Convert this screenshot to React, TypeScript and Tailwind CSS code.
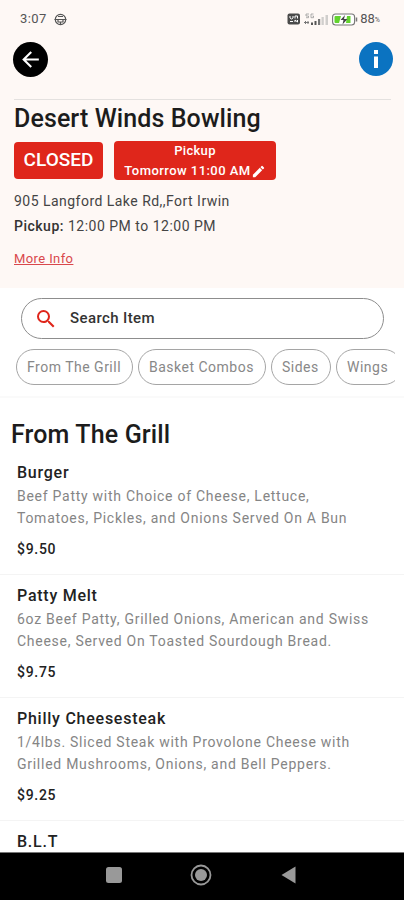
import { MdArrowBack, MdEdit, MdSearch } from "react-icons/md";

interface MenuItem {
  name: string;
  description: string[];
  price: string;
}

const categories = [
  { label: "From The Grill", width: "w-[117px]" },
  { label: "Basket Combos", width: "w-[128px]" },
  { label: "Sides", width: "w-[60px]" },
  { label: "Wings", width: "w-[66px]" },
];

const items: MenuItem[] = [
  {
    name: "Burger",
    description: ["Beef Patty with Choice of Cheese, Lettuce,", "Tomatoes, Pickles, and Onions Served On A Bun"],
    price: "$9.50",
  },
  {
    name: "Patty Melt",
    description: ["6oz Beef Patty, Grilled Onions, American and Swiss", "Cheese, Served On Toasted Sourdough Bread."],
    price: "$9.75",
  },
  {
    name: "Philly Cheesesteak",
    description: ["1/4lbs. Sliced Steak with Provolone Cheese with", "Grilled Mushrooms, Onions, and Bell Peppers."],
    price: "$9.25",
  },
  { name: "B.L.T", description: [], price: "" },
];

function StatusBar() {
  return (
    <div className="flex h-[38px] items-center pl-5 pr-[24px] text-[#555]">
      <span className="text-[13px] tracking-[0.4px]">3:07</span>
      <svg className="ml-[7px]" width="13" height="13" viewBox="0 0 13 13" fill="none" stroke="#555" strokeWidth="1.2">
        <circle cx="6.5" cy="6.5" r="5.2" />
        <path d="M0.500 6.500h12M4 7v2h5V7M6.500 9v2.500M4 3.500h5" />
      </svg>
      <div className="ml-auto flex items-center">
        <svg width="14" height="12" viewBox="0 0 14 12" fill="none">
          <rect x="0.5" y="0.5" width="12.5" height="11" rx="2" fill="#4a4a4a" />
          <path d="M3 3v2l1.500 1L6 5V3M8 5.500V3h2.500v2.500M3 8.500h3M8 9V7l2.500 2V7" stroke="#fff" strokeWidth="1" />
        </svg>
        <svg className="ml-[3px]" width="25" height="13" viewBox="0 0 25 13">
          <path d="M2 1h3M2 1v2h2.500v1.700H2M9.500 1H7v3.700h2.500V3H8.500" fill="none" stroke="#999" strokeWidth="0.8" />
          <path d="M0 9.500h5M1.500 8v3M4 8v3" fill="none" stroke="#777" strokeWidth="1" />
          <path d="M7 9.500h2V12H7zM10.500 8h2v4h-2z" fill="#555" />
          <path d="M14 6h2.200v6H14z" fill="#777" />
          <path d="M17.500 4h2.300v8h-2.300zM21.500 2h2.500v10h-2.500z" fill="#d0cecc" />
        </svg>
        <svg className="ml-[3px]" width="26" height="13" viewBox="0 0 26 13">
          <rect x="0.6" y="1" width="22" height="11" rx="3" fill="#fff" stroke="#777" strokeWidth="1.100" />
          <path d="M24.500 4.500v4" stroke="#777" strokeWidth="1.500" />
          <path d="M3.500 3H9L7 10H3.500A1 1 0 0 1 2.500 9V4A1 1 0 0 1 3.500 3zM15 3h3.500v7H14z" fill="#63d32e" />
          <path d="M13 2 8.500 7h3L10.500 11.500l5-5.500H12z" fill="#444" />
        </svg>
        <span className="ml-[2px] text-[13px]">88</span>
        <span className="mt-[3px] text-[7px]">%</span>
      </div>
    </div>
  );
}

function StoreHeader() {
  return (
    <header className="h-[288px] bg-[#fef8f5]">
      <StatusBar />
      <div className="flex items-start justify-between pl-[13px] pr-[11px] pt-1">
        <button className="flex size-[35px] items-center justify-center rounded-full bg-black">
          <MdArrowBack className="size-[25px] text-white" />
        </button>
        <button className="flex size-[34px] items-center justify-center rounded-full bg-[#0b73c1]">
          <svg width="6" height="18" viewBox="0 0 6 18" fill="#fff">
            <path d="M1 0h4v4H1zM1 6.500h4V18H1z" />
          </svg>
        </button>
      </div>
      <div className="ml-[14px] mr-[13px] mt-[22px] border-t border-[#e4e1df]" />
      <div className="pl-[14px]">
        <h1 className="mt-[3px] whitespace-nowrap text-[25px] font-medium leading-[32px] tracking-[0.1px] text-[#1c1c1c]">
          Desert Winds Bowling
        </h1>
        <div className="mt-[6px] flex items-center">
          <div className="flex h-[37px] w-[89px] items-center justify-center rounded-[4px] bg-[#df261b] text-[19px] font-medium text-white">
            CLOSED
          </div>
          <div className="ml-[11px] flex h-[39px] w-[162px] flex-col items-center rounded-[4px] bg-[#df261b] text-[13px] font-medium leading-[20px] text-white">
            <span className="tracking-[0.3px]">Pickup</span>
            <span className="flex items-center whitespace-nowrap tracking-[0.45px]">
              Tomorrow 11:00 AM
              <MdEdit className="size-[15px]" />
            </span>
          </div>
        </div>
        <p className="mt-[11px] text-[14px] leading-[20px] tracking-[0.47px] text-[#444]">905 Langford Lake Rd,,Fort Irwin</p>
        <p className="mt-[5px] text-[14px] leading-[20px] tracking-[0.5px] text-[#444]">
          <span className="font-medium text-[#333]">Pickup:</span> 12:00 PM to 12:00 PM
        </p>
        <a className="mt-[14px] block text-[13px] leading-[18px] tracking-[0.4px] text-[#d9484c] underline">More Info</a>
      </div>
    </header>
  );
}

function SearchAndCategories() {
  return (
    <section className="h-[110px] border-b-2 border-[#fafafa] pt-[10px]">
      <div className="ml-[21px] flex h-[41px] w-[363px] items-center rounded-full border border-[#8d8d8d] pl-3">
        <MdSearch className="size-[24px] text-[#df261b]" />
        <span className="ml-[12px] text-[15px] font-medium tracking-[0.4px] text-[#333]">Search Item</span>
      </div>
      <div className="ml-4 mr-[9px] mt-[10px] flex gap-[5px] overflow-hidden">
        {categories.map((c) => (
          <div
            key={c.label}
            className={`flex h-[36px] shrink-0 items-center whitespace-nowrap rounded-full border border-[#a5a5a5] pl-[10px] text-[14px] tracking-[0.5px] text-[#888] ${c.width}`}
          >
            {c.label}
          </div>
        ))}
      </div>
    </section>
  );
}

function MenuRow({ item }: { item: MenuItem }) {
  return (
    <li className="h-[123px] border-b border-[#f4f4f4] pl-[17px] pt-[10px]">
      <h3 className="text-[16px] font-medium leading-[22px] tracking-[0.75px] text-[#222]">{item.name}</h3>
      <p className="mt-px text-[14px] leading-[22px] tracking-[0.73px] text-[#858585]">
        {item.description.map((line) => (
          <span key={line} className="block whitespace-nowrap">{line}</span>
        ))}
      </p>
      <p className="mt-[9px] text-[14px] font-medium leading-[22px] tracking-[0.7px] text-[#222]">{item.price}</p>
    </li>
  );
}

function NavigationBar() {
  return (
    <nav className="flex h-[48px] shrink-0 items-start border-t border-[#777] bg-black">
      <svg width="404" height="46" viewBox="0 0 404 46" fill="#999">
        <rect x="106" y="14" width="16" height="16" rx="2.500" />
        <circle cx="201" cy="22" r="9.500" fill="none" stroke="#999" strokeWidth="1.800" />
        <circle cx="201" cy="22" r="6" />
        <path d="M281.500 22 295.500 13.500v17z" />
      </svg>
    </nav>
  );
}

export default function App() {
  return (
    <div className="flex h-[900px] w-[404px] flex-col overflow-hidden bg-white font-['Roboto',sans-serif]">
      <main className="min-h-0 flex-1 overflow-hidden">
        <StoreHeader />
        <SearchAndCategories />
        <h2 className="mt-[21px] pl-[11px] text-[25px] font-medium leading-[32px] tracking-[0.15px] text-[#1c1c1c]">
          From The Grill
        </h2>
        <ul className="mt-px">
          {items.map((item) => (
            <MenuRow key={item.name} item={item} />
          ))}
        </ul>
      </main>
      <NavigationBar />
    </div>
  );
}
